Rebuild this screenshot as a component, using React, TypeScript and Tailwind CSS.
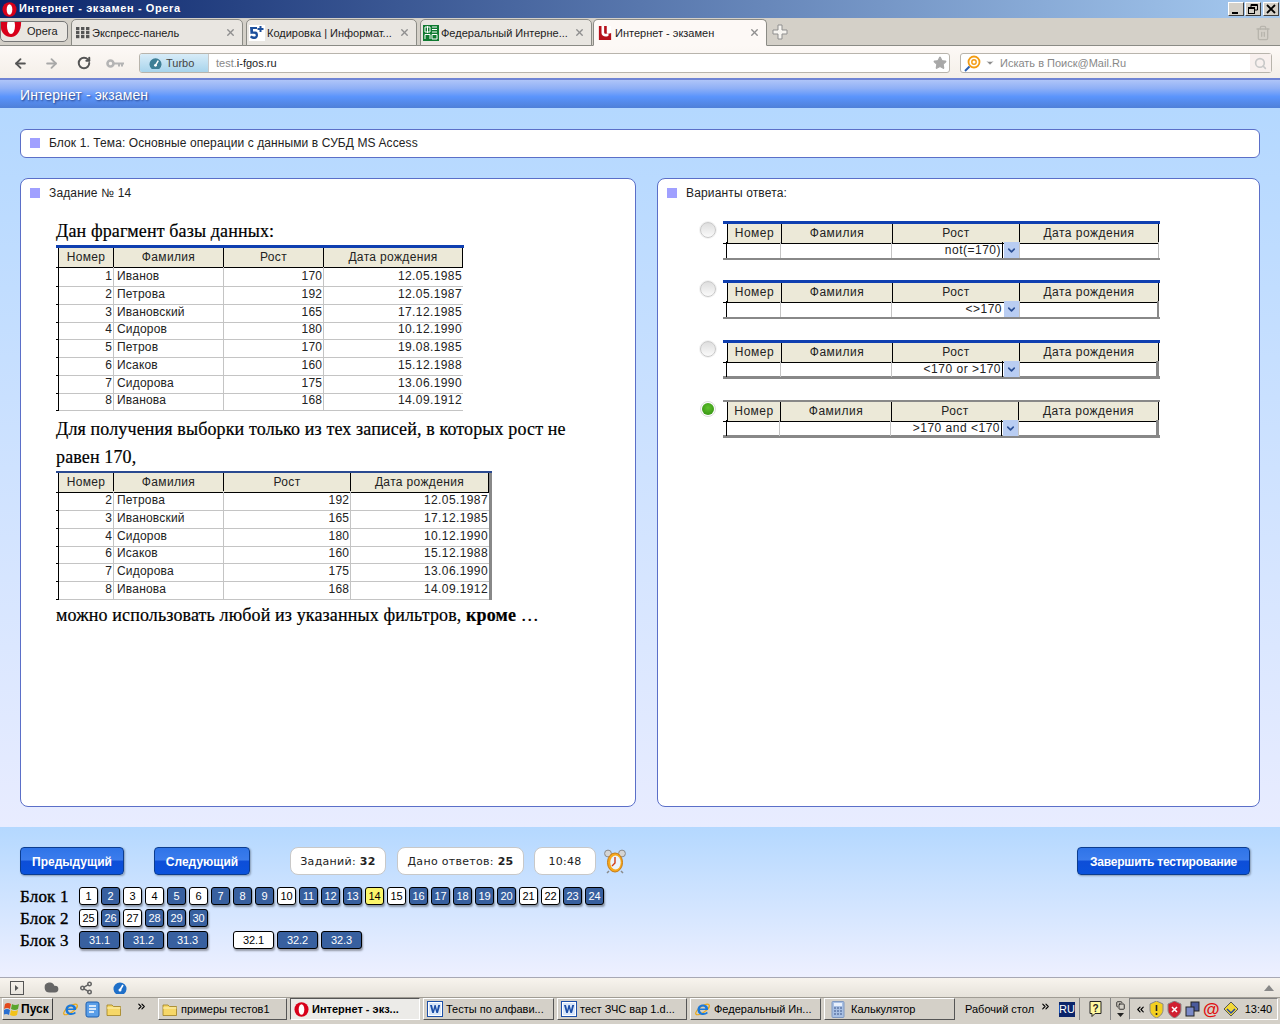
import React from "react";
import { ArrowLeft, ArrowRight, RotateCw, Star, Search, X, ChevronDown, ChevronsRight, ChevronsLeft, Cloud, Share2, Trash2, Copy } from "lucide-react";

const OperaO = ({ s = 16 }: { s?: number }) => (
  <svg width={s} height={s} viewBox="0 0 16 16" className="shrink-0">
    <ellipse cx="8" cy="8" rx="7.5" ry="7.8" fill="#d8001a" />
    <ellipse cx="8" cy="8" rx="3" ry="5.6" fill="#fff" />
  </svg>
);

const LogoU = ({ s = 14 }: { s?: number }) => (
  <svg width={s} height={s} viewBox="0 0 14 16" className="shrink-0">
    <rect width="14" height="16" fill="#fff" />
    <path d="M0 0 H9 V7 C9 9 11 9 14 8 V16 H0z" fill="#b5121b" />
    <path d="M3 0 V8 C3 12 8 13 11 11 V8 C8 9.5 6 9 6 7 V0z" fill="#fff" />
  </svg>
);

const Flag = () => (
  <svg width="16" height="15" viewBox="0 0 16 15" className="shrink-0">
    <path d="M1 2 Q4 0 7 2 L6 7 Q3 5 0 7z" fill="#e2491c" />
    <path d="M8 2 Q11 4 15 2 L14 7 Q11 9 7 7z" fill="#5aa52c" />
    <path d="M0 8 Q3 6 6 8 L5 13 Q2 11 -1 13z" fill="#2a6fd0" />
    <path d="M7 8 Q10 10 14 8 L13 13 Q10 15 6 13z" fill="#f2c21a" />
  </svg>
);

const IE = () => (
  <svg width="17" height="17" viewBox="0 0 17 17" className="shrink-0">
    <ellipse cx="8.5" cy="8.5" rx="8" ry="3" fill="none" stroke="#e8a818" strokeWidth="1.2" transform="rotate(-35 8.5 8.5)" />
    <path d="M14 9 H6 C6 12.5 11 13 13 10.8 L13.8 12.3 C10 15.5 3.5 14 3.5 8.7 C3.5 3.5 10 2 13 5 C14.2 6.2 14.2 7.8 14 9 Z M6 7.5 H11.4 C11.2 4.7 6.4 4.7 6 7.5 Z" fill="#1a78d8" />
  </svg>
);

const WordIcon = () => (
  <svg width="16" height="16" viewBox="0 0 16 16" className="shrink-0">
    <rect x="0.5" y="0.5" width="15" height="15" fill="#fff" stroke="#1c4fa8" />
    <rect x="2" y="2" width="12" height="12" fill="#d8e6fa" />
    <path d="M3 4 h2 l1.2 5 1.3 -5 h1.2 l1.3 5 1.2 -5 h2 l-2.2 8 h-1.6 l-1.3 -4.5 -1.3 4.5 h-1.6z" fill="#1c4fa8" />
  </svg>
);

const Folder = () => (
  <svg width="16" height="15" viewBox="0 0 16 15" className="shrink-0">
    <path d="M1 3 h5 l1.5 1.5 h7 v9 h-13.5z" fill="#f6d768" stroke="#a08020" strokeWidth="0.8" />
    <path d="M1 6 h13.5" stroke="#fff4b8" />
  </svg>
);

const Calc = () => (
  <svg width="14" height="17" viewBox="0 0 14 17" className="shrink-0">
    <rect x="1" y="0.5" width="12" height="16" rx="1" fill="#a8c0e4" stroke="#7f98c0" />
    <rect x="3" y="2" width="8" height="3" fill="#e8f0fc" />
    <path d="M3 7 h2 M6 7 h2 M9 7 h2 M3 10 h2 M6 10 h2 M9 10 h2 M3 13 h2 M6 13 h2 M9 13 h2" stroke="#5f78a8" strokeWidth="1.4" />
  </svg>
);

const Alarm = () => (
  <svg width="24" height="25" viewBox="0 0 24 25">
    <circle cx="5" cy="4.5" r="3.4" fill="#d4d4d4" stroke="#8a8a8a" />
    <circle cx="19" cy="4.5" r="3.4" fill="#d4d4d4" stroke="#8a8a8a" />
    <ellipse cx="12" cy="13.5" rx="7.5" ry="9.5" fill="#f6a81c" stroke="#c97a10" />
    <ellipse cx="12.5" cy="13.5" rx="5.2" ry="7" fill="#eaf4ff" />
    <path d="M12 8 v6 l-3 3" stroke="#d23c14" strokeWidth="1.4" fill="none" />
    <path d="M6 22 l-2 2 M18 22 l2 2" stroke="#8a8a8a" strokeWidth="1.5" />
  </svg>
);

const GaugeDisc = ({ c, s }: { c: string; s: number }) => (
  <svg width={s} height={s} viewBox="0 0 14 14" className="shrink-0">
    <path d="M3 13 A6.5 6.5 0 1 1 11 13z" fill={c} />
    <path d="M7 9 L10 4" stroke="#fff" strokeWidth="1.6" />
    <circle cx="7" cy="9" r="1.5" fill="#fff" />
  </svg>
);

type Row = (string | number)[];

function DataTable({ cols, rows, top, right, headH }: { cols: number[]; rows: Row[]; top: string; right: string; headH: string }) {
  const tpl = "2px " + cols.map((c) => c + "px").join(" ");
  const heads = ["Номер", "Фамилия", "Рост", "Дата рождения"];
  return (
    <div className={`font-['Liberation_Sans',sans-serif] text-[12px] leading-[19px] text-[#222] [-webkit-text-stroke:0px] ${top}`}>
      <div className={right}>
        <div className={`grid ${headH}`} style={{ gridTemplateColumns: tpl }}>
          <div className="border-b border-black" />
          {heads.map((h) => (
            <div key={h} className="bg-[#ece9d8] border-l border-b border-black text-center tracking-[0.35px] last:border-r">{h}</div>
          ))}
        </div>
        {rows.map((r, i) => (
          <div key={i} className="grid h-[17.75px]" style={{ gridTemplateColumns: tpl }}>
            <div className="border-b border-black" />
            <div className="border-l border-black border-b border-b-[#c4c4c4] text-right pr-[1px]">{r[0]}</div>
            <div className="border-l border-[#c4c4c4] border-b text-left pl-[3px] tracking-[0.2px]">{r[1]}</div>
            <div className="border-l border-[#c4c4c4] border-b text-right pr-[1px]">{r[2]}</div>
            <div className="border-l border-[#c4c4c4] border-b text-right pr-[1px] tracking-[0.4px]">{r[3]}</div>
          </div>
        ))}
        <div className="grid h-[2px]" style={{ gridTemplateColumns: tpl }}>
          <div />
          <div className="border-l border-black" />
          <div className="border-l border-[#c4c4c4]" />
          <div className="border-l border-[#c4c4c4]" />
          <div className="border-l border-[#c4c4c4]" />
        </div>
      </div>
    </div>
  );
}

const t1: Row[] = [
  [1, "Иванов", 170, "12.05.1985"],
  [2, "Петрова", 192, "12.05.1987"],
  [3, "Ивановский", 165, "17.12.1985"],
  [4, "Сидоров", 180, "10.12.1990"],
  [5, "Петров", 170, "19.08.1985"],
  [6, "Исаков", 160, "15.12.1988"],
  [7, "Сидорова", 175, "13.06.1990"],
  [8, "Иванова", 168, "14.09.1912"],
];
const t2 = t1.filter((r) => r[0] !== 1 && r[0] !== 5);

function Answer({ value, checked, top, bottom, mt, caret, cols, edge }: { value: string; checked?: boolean; top: string; bottom: string; mt: string; caret?: boolean; cols: string; edge: string }) {
  const heads = ["Номер", "Фамилия", "Рост", "Дата рождения"];
  return (
    <div className={`flex items-start ${mt}`}>
      {checked ? (
        <div className="w-[16px] h-[16px] mt-[1px] rounded-full border border-[#dcdcdc] bg-white flex items-center justify-center shrink-0">
          <div className="w-[12px] h-[12px] rounded-full bg-[radial-gradient(circle_at_50%_40%,#5fc22c,#2f8a10)]" />
        </div>
      ) : (
        <div className="w-[16px] h-[16px] mt-[1px] rounded-full border border-[#c8c8c8] bg-gradient-to-b from-[#dedede] to-[#fafafa] shadow-[0_0_0_1px_#f2f2f2] shrink-0" />
      )}
      <div className={`ml-[7px] w-[437px] font-['Liberation_Sans',sans-serif] text-[12px] leading-[19px] text-[#222] ${top}`}>
        <div className="grid h-[18px]" style={{ gridTemplateColumns: cols }}>
          <div className="border-b border-black" />
          {heads.map((h) => (
            <div key={h} className="bg-[#ece9d8] border-l border-b border-black text-center tracking-[0.5px] last:border-r">{h}</div>
          ))}
        </div>
        <div className={`grid h-[18px] ${bottom}`} style={{ gridTemplateColumns: cols }}>
          <div className="border-r border-black" />
          <div className="border-r border-[#c4c4c4]" />
          <div className="border-r border-[#c4c4c4]" />
          <div className="flex justify-end items-center">
            <span className={`tracking-[0.5px] pt-[1px] ${caret ? "border-r border-black pr-[1px] leading-[15px]" : "pr-[1px] leading-[15px]"}`}>{value}</span>
            <span className="w-[15px] h-[16px] bg-[#b9cdf2] flex items-center justify-center ml-[1px]">
              <ChevronDown size={11} strokeWidth={3.5} color="#2a4f96" />
            </span>
          </div>
          <div className={`border-l border-[#c4c4c4] ${edge}`} />
        </div>
      </div>
    </div>
  );
}

const whites = new Set([1, 3, 4, 6, 10, 15, 21, 22, 25, 27]);

function Pg({ n, wide, white, yellow }: { n: string | number; wide?: boolean; white?: boolean; yellow?: boolean }) {
  const color = yellow ? "bg-[#fbf56a] text-black" : white ? "bg-white text-black" : "bg-[#38609f] text-white";
  return (
    <div className={`${wide ? "w-[41px]" : "w-[19px]"} h-[18px] rounded-[3px] border border-black shadow-[1px_2px_2px_rgba(0,0,0,0.35)] flex items-center justify-center text-[11px] tracking-[-0.1px] font-['Liberation_Sans',sans-serif] shrink-0 ${color}`}>
      {n}
    </div>
  );
}

const range = (a: number, b: number) => Array.from({ length: b - a + 1 }, (_, i) => a + i);

function BlockRow({ label, children }: { label: string; children: React.ReactNode }) {
  return (
    <div className="flex items-center h-[18px] mb-[4px]">
      <div className="w-[59px] font-['Liberation_Serif',serif] text-[17px] text-black [-webkit-text-stroke:0.35px_black] tracking-[0.2px] leading-none">{label}</div>
      <div className="flex gap-[3px]">{children}</div>
    </div>
  );
}

function Tab({ icon, text, active, w, pl }: { icon: React.ReactNode; text: string; active?: boolean; w: string; pl: string }) {
  return (
    <div className={`${w} ${pl} h-[27px] -mb-px flex items-center gap-[2px] pr-[6px] border border-[#8b8b85] rounded-t-[5px] text-[11px] text-[#222] ${active ? "bg-[#fdf9f6] border-b-[#fdf9f6]" : "bg-[#e9e6e1]"}`}>
      {icon}
      <span className="flex-1 whitespace-nowrap pt-[1px]">{text}</span>
      <X size={11} strokeWidth={3} color="#8f8f8f" className="shrink-0" />
    </div>
  );
}

function Task({ icon, text, w, active }: { icon: React.ReactNode; text: string; w: string; active?: boolean }) {
  return (
    <div className={`${w} h-[22px] flex items-center gap-[3px] pl-[3px] text-[11px] text-black shrink-0 ${active ? "font-bold bg-[#ecebe8] border border-t-[#555] border-l-[#555] border-b-white border-r-white" : "bg-[#d4d0c8] border border-t-white border-l-white border-b-[#555] border-r-[#555]"}`}>
      {icon}
      <span className="whitespace-nowrap">{text}</span>
    </div>
  );
}

function Chip({ w, children }: { w: string; children: React.ReactNode }) {
  return (
    <div className={`${w} h-[28px] bg-white rounded-[8px] border border-[#c8c8c8] flex items-center justify-center text-[11px] tracking-[0.3px] text-[#222] font-['DejaVu_Sans',sans-serif] whitespace-pre pt-[2px]`}>
      {children}
    </div>
  );
}

const btn = "h-[28px] pt-[1px] rounded-[4px] border border-[#0c3d8f] bg-[linear-gradient(#2f74e8_0%,#3b7cec_45%,#0d4ed8_52%,#0a52dc_100%)] text-white font-bold text-[12px] flex items-center justify-center shadow-[1px_1px_2px_rgba(0,0,0,0.3)] font-['Liberation_Sans',sans-serif]";

const Square = () => <div className="w-[10px] h-[10px] bg-[#a0a0ff] shrink-0" />;

const winBtn = "w-[16px] h-[14px] bg-[#d4d0c8] border border-t-white border-l-white border-b-[#404040] border-r-[#404040] flex items-center justify-center";

const serifBold = "[-webkit-text-stroke:0.2px_black] tracking-[0.13px]";

export default function App() {
  return (
    <div className="w-[1280px] h-[1024px] overflow-hidden flex flex-col font-['Liberation_Sans',sans-serif]">
      {/* title bar */}
      <div className="h-[18px] shrink-0 flex items-center bg-[linear-gradient(90deg,#0a246a,#a6caf0)] pl-[2px] pr-[1px]">
        <OperaO s={15} />
        <span className="ml-[2px] pb-[2px] text-white font-bold text-[11px] tracking-[0.6px]">Интернет - экзамен - Opera</span>
        <div className="ml-auto flex gap-[1px] pb-[1px]">
          <div className={winBtn}><svg width="10" height="10" viewBox="0 0 10 10"><path d="M1 8 H7 V10 H1z" fill="#000" /></svg></div>
          <div className={winBtn}><svg width="10" height="10" viewBox="0 0 10 10" fill="none" stroke="#000"><path d="M3 3 V0.5 H9.5 V6 H7" /><path d="M3 1 H9" strokeWidth="2" /><rect x="0.5" y="3.5" width="6" height="6" /><path d="M0.5 4 H6.5" strokeWidth="2" /></svg></div>
          <div className={`${winBtn} ml-[1px]`}><svg width="10" height="10" viewBox="0 0 10 10"><path d="M1 1 L9 9 M9 1 L1 9" stroke="#000" strokeWidth="1.8" /></svg></div>
        </div>
      </div>

      {/* tab strip */}
      <div className="h-[28px] shrink-0 bg-[#d4d0c8] border-b border-[#8b8b85] flex items-end relative">
        <div className="w-[68px] h-[21px] mb-[3px] flex items-center bg-[#e9e6e1] border border-[#777] rounded-b-[5px] rounded-r-[5px] overflow-hidden text-[11px] text-[#222] mr-[3px]">
          <svg width="22" height="20" viewBox="0 0 22 20" className="shrink-0 -mt-[4px]"><path d="M0 0 H20 C21 10 16 17 10 17 C4 17 0 12 0 8z" fill="#d8001a" /><ellipse cx="10" cy="6" rx="4" ry="8" fill="#fff" /></svg>
          <span className="ml-[4px]">Opera</span>
        </div>
        <div className="flex gap-[3px] items-end">
          <Tab w="w-[172px]" pl="pl-[4px]" text="Экспресс-панель" icon={<svg width="14" height="12" viewBox="0 0 14 12" className="shrink-0">{[0, 5, 10].flatMap((x) => [0, 4, 8].map((y) => <rect key={`${x}${y}`} x={x} y={y} width="3.4" height="3.2" fill="#555" />))}</svg>} />
          <Tab w="w-[171px]" pl="pl-[2px]" text="Кодировка | Информат..." icon={<svg width="16" height="16" viewBox="0 0 16 16" className="shrink-0"><rect width="16" height="16" fill="#fff" /><path d="M1 2 H8 V4 H4 V6.5 H6.5 C10 6.5 10 14 5.5 14 C3.5 14 1.5 13.5 1 12 L2.5 10.5 C4 12 7 12 6.8 10 C6.6 8.5 4 8.5 1.5 9z" fill="#1c4f9c" /><path d="M11.5 1 V7 M8.5 4 H14.5" stroke="#1c4f9c" strokeWidth="2" /></svg>} />
          <Tab w="w-[172px]" pl="pl-[2px]" text="Федеральный Интерне..." icon={<svg width="16" height="16" viewBox="0 0 16 16" className="shrink-0"><rect width="16" height="16" fill="#0f7a30" /><path d="M2 2 H7 V7 H2z M4.5 1 V8 M9 2 H14 M9 4.5 H14 M9 7 H14 M2 14 V9.5 H7 V14 M9 9.5 H14 V14 H9z" fill="none" stroke="#fff" /></svg>} />
        </div>
        <div className="ml-px flex items-end">
          <Tab w="w-[174px]" pl="pl-[4px]" active text="Интернет - экзамен" icon={<span className="mr-[1px] inline-flex"><LogoU s={14} /></span>} />
        </div>
        <svg width="16" height="16" viewBox="0 0 16 16" className="ml-[5px] mb-[5px]"><path d="M6 1 H10 V6 H15 V10 H10 V15 H6 V10 H1 V6 H6z" fill="#f6f4f0" stroke="#8f8f8f" /></svg>
        <Trash2 size={16} color="#b8b5ad" className="ml-auto mr-[9px] mb-[4px]" />
      </div>

      {/* address bar */}
      <div className="h-[32px] shrink-0 pt-[2px] bg-[linear-gradient(#fdf9f6,#f4efe9)] flex items-center pl-[13px] pr-[8px]">
        <ArrowLeft size={15} strokeWidth={3} color="#555" />
        <ArrowRight size={15} strokeWidth={3} color="#a8a8a8" className="ml-[16px]" />
        <RotateCw size={14} strokeWidth={3.4} color="#555" className="ml-[18px]" />
        <svg width="19" height="9" viewBox="0 0 19 9" className="ml-[15px]"><circle cx="4.5" cy="4.5" r="3" fill="none" stroke="#b4b4b4" strokeWidth="2.6" /><path d="M8 4.5 H18 M13 4.5 V7.5 M16 4.5 V7.5" stroke="#b4b4b4" strokeWidth="2" /></svg>
        <div className="ml-[14px] w-[811px] h-[20px] bg-white border border-[#b8b4ac] rounded-[3px] flex items-center overflow-hidden text-[11px]">
          <div className="w-[69px] h-full bg-[linear-gradient(#d8ecf8,#a8d4ec)] flex items-center gap-[4px] pl-[9px] text-[#444] border-r border-[#c8c8c8]">
            <GaugeDisc c="#3f7f96" s={13} />
            Turbo
          </div>
          <span className="ml-[7px] text-[#888]">test.</span><span className="text-[#222]">i-fgos.ru</span>
          <Star size={14} fill="#a8a8a8" color="#a8a8a8" className="ml-auto mr-[2px]" />
        </div>
        <div className="ml-[10px] w-[312px] h-[20px] bg-white border border-[#b8b4ac] rounded-[3px] flex items-center text-[11px] text-[#888]">
          <svg width="17" height="17" viewBox="0 0 17 17" className="ml-[3px] shrink-0"><circle cx="10" cy="7" r="5.5" fill="none" stroke="#f39c12" strokeWidth="1.8" /><circle cx="10" cy="7" r="2.2" fill="none" stroke="#f39c12" strokeWidth="1.4" /><path d="M5.5 11.5 L1 16" stroke="#2a5fb0" strokeWidth="2" /></svg>
          <ChevronDown size={10} fill="#888" color="#888" className="ml-[4px]" />
          <span className="ml-[5px]">Искать в Поиск@Mail.Ru</span>
          <div className="ml-auto w-[21px] h-full bg-[#f8f0ee] flex items-center justify-center">
            <Search size={13} strokeWidth={3} color="#c8c8c8" />
          </div>
        </div>
      </div>

      {/* site header */}
      <div className="h-[30px] shrink-0 pt-[2px] border-t-2 border-[#6f84d4] bg-[linear-gradient(#afc5f8_0%,#8fb0f6_30%,#5a94fc_60%,#4f80d8_100%)] flex items-center pl-[20px] text-white text-[14px] tracking-[0.1px] [text-shadow:1px_1px_2px_rgba(0,0,40,0.6)]">
        Интернет - экзамен
      </div>

      {/* main */}
      <div className="h-[719px] shrink-0 bg-[linear-gradient(#b4d8ff,#e8ecff)] pt-[21px] px-[20px]">
        <div className="h-[29px] pb-[2px] bg-white border border-[#5b6fc8] rounded-[6px] flex items-center pl-[9px] gap-[9px] text-[12px] tracking-[0.1px] text-[#222]">
          <Square />
          <span>Блок 1. Тема: Основные операции с данными в СУБД MS Access</span>
        </div>
        <div className="mt-[20px] flex gap-[21px] h-[629px]">
          <div className="w-[616px] bg-white border border-[#5b6fc8] rounded-[8px] pt-[8px]">
            <div className="flex items-center pl-[9px] gap-[9px] text-[12px] tracking-[0.15px] text-[#222] h-[12px]">
              <Square />
              <span>Задание № 14</span>
            </div>
            <div className={`ml-[35px] mt-[18px] font-['Liberation_Serif',serif] text-[18px] leading-[28px] text-black w-[540px] ${serifBold}`}>
              <div className="h-[28px]">Дан фрагмент базы данных:</div>
              <div className="w-[408px]">
                <DataTable cols={[55, 110, 100, 140]} rows={t1} top="border-t-[3px] border-[#0f3fb0]" right="" headH="h-[19px]" />
              </div>
              <div className="mt-[4px]">Для получения выборки только из тех записей, в которых рост не равен 170,</div>
              <div className="w-[436px]">
                <DataTable cols={[55, 110, 127, 139]} rows={t2} top="border-t-[2px] border-[#2a4a90]" right="border-r-[3px] border-[#888]" headH="h-[18px]" />
              </div>
              <div className="mt-[1px]">можно использовать любой из указанных фильтров, <b>кроме</b> …</div>
            </div>
          </div>
          <div className="w-[603px] bg-white border border-[#5b6fc8] rounded-[8px] pt-[8px]">
            <div className="flex items-center pl-[9px] gap-[9px] text-[12px] tracking-[0.15px] text-[#222] h-[12px]">
              <Square />
              <span>Варианты ответа:</span>
            </div>
            <div className="pl-[42px]">
              <Answer mt="mt-[22px]" cols="4px 54px 111px 127px 140px" value="not(=170)" caret top="border-t-[3px] border-[#0f3fb0]" bottom="border-b-2 border-[#888]" edge="border-r border-r-[#bbb]" />
              <Answer mt="mt-[20px]" cols="4px 54px 111px 127px 140px" value="<>170" top="border-t-[3px] border-[#0f3fb0]" bottom="border-b-2 border-[#888]" edge="border-r-2 border-r-[#888]" />
              <Answer mt="mt-[21px]" cols="4px 54px 111px 127px 140px" value="<170 or >170" caret top="border-t-[3px] border-[#0f3fb0]" bottom="border-b-[3px] border-[#888]" edge="border-r-[3px] border-r-[#888]" />
              <Answer mt="mt-[21px]" cols="4px 53px 111px 127px 141px" value=">170 and <170" caret checked top="border-t-[2px] border-[#888]" bottom="border-b-[3px] border-[#888]" edge="border-r-[3px] border-r-[#888]" />
            </div>
          </div>
        </div>
      </div>

      {/* footer */}
      <div className="h-[150px] shrink-0 bg-[linear-gradient(#b4d8ff,#eef0ff)] px-[20px] pt-[20px]">
        <div className="flex items-center h-[28px]">
          <div className={`${btn} w-[104px]`}>Предыдущий</div>
          <div className={`${btn} w-[96px] ml-[30px]`}>Следующий</div>
          <div className="ml-[40px]"><Chip w="w-[96px]">Заданий: <b>32</b></Chip></div>
          <div className="ml-[11px]"><Chip w="w-[127px]">Дано ответов: <b>25</b></Chip></div>
          <div className="ml-[10px]"><Chip w="w-[62px]">10:48</Chip></div>
          <div className="ml-[7px]"><Alarm /></div>
          <div className={`${btn} w-[173px] ml-auto mr-[10px] tracking-[-0.2px]`}>Завершить тестирование</div>
        </div>
        <div className="mt-[12px]">
          <BlockRow label="Блок 1">
            {range(1, 24).map((n) => <Pg key={n} n={n} white={whites.has(n)} yellow={n === 14} />)}
          </BlockRow>
          <BlockRow label="Блок 2">
            {range(25, 30).map((n) => <Pg key={n} n={n} white={whites.has(n)} />)}
          </BlockRow>
          <BlockRow label="Блок 3">
            <Pg wide n="31.1" /><Pg wide n="31.2" /><Pg wide n="31.3" />
            <div className="w-[19px]" />
            <Pg wide white n="32.1" /><Pg wide n="32.2" /><Pg wide n="32.3" />
          </BlockRow>
        </div>
      </div>

      {/* opera status bar */}
      <div className="h-[21px] shrink-0 border-t border-[#a8a8b4] border-b border-b-[#a09c94] bg-[linear-gradient(#f8f4ee,#e6e2da)] flex items-center pl-[10px] pr-[6px] gap-[20px]">
        <svg width="14" height="14" viewBox="0 0 14 14" className="shrink-0"><rect x="0.5" y="0.5" width="13" height="13" fill="none" stroke="#555" /><path d="M5 4 L8.5 7 L5 10z" fill="#555" /></svg>
        <Cloud size={15} fill="#666" color="#666" />
        <Share2 size={14} color="#666" strokeWidth={2.6} />
        <GaugeDisc c="#1f6fc8" s={14} />
        <svg width="10" height="6" viewBox="0 0 10 6" className="ml-auto"><path d="M0 6 L5 0 L10 6z" fill="#888" /></svg>
      </div>

      {/* taskbar */}
      <div className="h-[26px] shrink-0 pb-[4px] bg-[#d4d0c8] flex items-center pl-[2px] text-[11px] text-black">
        <div className="w-[51px] h-[22px] shrink-0 flex items-center gap-[1px] pl-[1px] font-bold text-[12px] border border-t-white border-l-white border-b-[#404040] border-r-[#404040]">
          <Flag />Пуск
        </div>
        <div className="ml-[9px] flex items-center gap-[6px] shrink-0">
          <IE />
          <svg width="15" height="17" viewBox="0 0 15 17"><rect x="1" y="1" width="13" height="15" rx="2" fill="#5a9ee8" stroke="#1c5fb0" /><path d="M4 5 h7 M4 8 h7 M4 11 h5" stroke="#fff" strokeWidth="1.4" /></svg>
          <Folder />
        </div>
        <ChevronsRight size={11} strokeWidth={2.5} className="ml-[14px] mb-[6px] shrink-0" />
        <div className="ml-[11px] flex gap-[3px] shrink-0">
          <Task w="w-[129px]" icon={<Folder />} text="примеры тестов1" />
          <Task w="w-[130px]" active icon={<OperaO s={15} />} text="Интернет - экз..." />
          <Task w="w-[131px]" icon={<WordIcon />} text="Тесты по алфави..." />
          <Task w="w-[130px]" icon={<WordIcon />} text="тест ЗЧС вар 1.d..." />
          <Task w="w-[131px]" icon={<IE />} text="Федеральный Ин..." />
          <Task w="w-[131px]" icon={<span className="mx-[3px] inline-flex"><Calc /></span>} text="Калькулятор" />
        </div>
        <span className="ml-[10px] whitespace-nowrap shrink-0">Рабочий стол</span>
        <ChevronsRight size={11} strokeWidth={2.5} className="ml-[6px] mb-[6px] shrink-0" />
        <div className="ml-[8px] w-[16px] h-[15px] shrink-0 bg-[#0a246a] text-white text-[11px] text-center leading-[15px]">RU</div>
        <div className="ml-[4px] h-[22px] border-l border-[#888] pl-[9px] flex items-center shrink-0">
          <svg width="13" height="16" viewBox="0 0 13 16"><path d="M1 0.5 H12 V12.5 H6 L3 15.5 V12.5 H1z" fill="#fff8a0" stroke="#222" /><text x="6.5" y="10.5" textAnchor="middle" fontSize="10" fontWeight="700" fontFamily="Liberation Sans" fill="#222">?</text></svg>
        </div>
        <div className="ml-[8px] h-[22px] border-l border-[#888] pl-[5px] flex flex-col items-center justify-center shrink-0">
          <Copy size={9} />
          <svg width="7" height="4" viewBox="0 0 7 4" className="mt-[3px]"><path d="M0 0 H7 L3.5 4z" fill="#222" /></svg>
        </div>
        <div className="ml-[4px] flex-1 min-w-0 mr-[2px] h-[22px] border border-t-[#808080] border-l-[#808080] border-b-white border-r-white flex items-center pl-[5px] gap-[3px]">
          <ChevronsLeft size={11} strokeWidth={2.5} className="shrink-0" />
          <svg width="15" height="17" viewBox="0 0 15 17" className="shrink-0"><path d="M7.5 0 L14 3 V9 C14 13 10 16 7.5 17 C5 16 1 13 1 9 V3z" fill="#f4d020" stroke="#888" /><path d="M7.5 4 V10 M7.5 12 V14" stroke="#222" strokeWidth="1.6" /></svg>
          <svg width="15" height="17" viewBox="0 0 15 17" className="shrink-0"><path d="M7.5 0 L14 3 V9 C14 13 10 16 7.5 17 C5 16 1 13 1 9 V3z" fill="#d02030" stroke="#888" /><path d="M5 6 L10 11 M10 6 L5 11" stroke="#fff" strokeWidth="1.6" /></svg>
          <svg width="15" height="16" viewBox="0 0 15 16" className="shrink-0"><rect x="6" y="1" width="8" height="9" fill="#4a5a9c" stroke="#222" /><rect x="1" y="6" width="8" height="9" fill="#7a8ac8" stroke="#222" /></svg>
          <span className="text-[#e01010] text-[17px] leading-none font-bold">@</span>
          <svg width="16" height="16" viewBox="0 0 16 16" className="shrink-0"><path d="M8 1 L15 8 L8 15 L1 8z" fill="#f2d838" stroke="#555" /><path d="M4 8 L8 12 L12 8" stroke="#2244aa" strokeWidth="1.5" fill="none" /></svg>
          <span className="ml-[3px] whitespace-nowrap">13:40</span>
        </div>
      </div>
    </div>
  );
}
